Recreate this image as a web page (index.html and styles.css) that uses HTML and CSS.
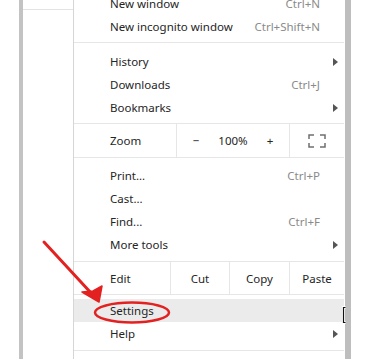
FILE: index.html
```html
<!DOCTYPE html>
<html lang="en">
<head>
  <meta charset="UTF-8">
  <meta name="viewport" content="width=device-width, initial-scale=1.0">
  <title>Chrome menu</title>
  <link rel="stylesheet" href="styles.css">
</head>
<body>
  <div class="screen">
    <div class="gutter"></div>
    <div class="bar"></div>
    <div class="side"><div class="side-top"></div></div>

    <div class="menu">
      <div class="item"><span class="label">New window</span><span class="key">Ctrl+N</span><span class="sub"></span></div>
      <div class="item"><span class="label">New incognito window</span><span class="key">Ctrl+Shift+N</span><span class="sub"></span></div>
      <div class="sep sep-a"></div>
      <div class="item"><span class="label">History</span><span class="sub"><i class="tri"></i></span></div>
      <div class="item"><span class="label">Downloads</span><span class="key">Ctrl+J</span><span class="sub"></span></div>
      <div class="item"><span class="label">Bookmarks</span><span class="sub"><i class="tri"></i></span></div>

      <div class="row zoom">
        <span class="row-label zoom-label">Zoom</span>
        <span class="zoom-ctrl">
          <span class="zbtn">&minus;</span>
          <span class="zval">100%</span>
          <span class="zbtn">+</span>
        </span>
        <span class="full">
          <svg width="18" height="14" viewBox="0 0 18 14">
            <path d="M1 5V1H6M12 1H17V5M17 9V13H12M6 13H1V9" fill="none" stroke="#6f6f6f" stroke-width="1.5"/>
          </svg>
        </span>
      </div>

      <div class="item first"><span class="label">Print...</span><span class="key">Ctrl+P</span><span class="sub"></span></div>
      <div class="item"><span class="label">Cast...</span><span class="sub"></span></div>
      <div class="item"><span class="label">Find...</span><span class="key">Ctrl+F</span><span class="sub"></span></div>
      <div class="item"><span class="label">More tools</span><span class="sub"><i class="tri"></i></span></div>

      <div class="row edit">
        <span class="row-label edit-label">Edit</span>
        <span class="cell cut">Cut</span>
        <span class="cell copy">Copy</span>
        <span class="cell paste">Paste</span>
      </div>

      <div class="item hover"><span class="label">Settings</span><span class="sub"></span></div>
      <div class="item"><span class="label">Help</span><span class="sub"><i class="tri"></i></span></div>
      <div class="sep sep-b"></div>
    </div>

    <div class="bar bar-right"></div>
  </div>

  <svg class="notes" width="369" height="359" viewBox="0 0 369 359">
    <line x1="44" y1="242" x2="92" y2="294" stroke="#e32121" stroke-width="3" stroke-linecap="round"/>
    <path d="M99 302L82 292L93 291L102 286Z" fill="#e32121" stroke="#e32121" stroke-width="1.5" stroke-linejoin="round"/>
    <ellipse cx="132" cy="312.5" rx="37" ry="10" fill="none" stroke="#e32121" stroke-width="2.5"/>
    <path d="M345.5 307.5H343.5V322.5H345.5" fill="none" stroke="#fff" stroke-width="3"/>
    <path d="M345.5 307.5H343.5V322.5H345.5" fill="none" stroke="#111" stroke-width="1.2"/>
  </svg>
</body>
</html>
```

FILE: styles.css
```css
body {
  margin: 0;
  background: #fff;
  overflow: hidden;
  font-family: "Noto Sans", "Open Sans", Arial, sans-serif;
  font-size: 11.5px;
  color: #252525;
}
.screen {
  display: flex;
  height: 359px;
  overflow: hidden;
}
.gutter {
  width: 19px;
}
.bar {
  width: 4px;
  background: #c3c3c3;
}
.side {
  width: 50px;
}
.side-top {
  height: 9px;
  border-bottom: 1px solid #e4e4e4;
}
.menu {
  width: 270px;
  border-left: 1px solid #d6d6d6;
  margin-top: -8px;
}
.bar-right {
  width: 6px;
  margin-left: 1px;
  background: #bebebe;
}
.item {
  display: flex;
  align-items: center;
  height: 23px;
  padding-left: 36px;
}
.item.first {
  margin-top: 6px;
}
.item.hover {
  background: #ebebeb;
  margin-top: 4px;
}
.label {
  flex: 1;
}
.key {
  color: #8a8a8a;
}
.sub {
  width: 24px;
  display: flex;
  justify-content: flex-end;
  padding-right: 6px;
  box-sizing: border-box;
}
.tri {
  width: 0;
  height: 0;
  border-top: 4px solid transparent;
  border-bottom: 4px solid transparent;
  border-left: 5px solid #555;
}
.sep {
  height: 1px;
  background: #e6e6e6;
}
.sep-a {
  margin: 4px 0 7px;
}
.sep-b {
  margin-top: 5px;
}
.row {
  display: flex;
  border-top: 1px solid #e6e6e6;
  border-bottom: 1px solid #e6e6e6;
}
.zoom {
  height: 33px;
  margin-top: 4px;
}
.edit {
  height: 32px;
  margin-top: 5px;
}
.row-label {
  display: flex;
  align-items: center;
  padding-left: 36px;
  box-sizing: border-box;
}
.zoom-label {
  width: 102px;
}
.edit-label {
  width: 96px;
}
.zoom-ctrl {
  width: 112px;
  display: flex;
  align-items: center;
  border-left: 1px solid #e6e6e6;
  border-right: 1px solid #e6e6e6;
}
.zbtn {
  width: 38px;
  text-align: center;
}
.zval {
  width: 36px;
  text-align: center;
}
.full {
  flex: 1;
  display: flex;
  align-items: center;
  justify-content: center;
}
.cell {
  display: flex;
  align-items: center;
  justify-content: center;
  border-left: 1px solid #e6e6e6;
}
.cut {
  width: 58px;
}
.copy {
  width: 59px;
}
.paste {
  flex: 1;
}
.notes {
  position: absolute;
  top: 0;
  left: 0;
  pointer-events: none;
}
```
